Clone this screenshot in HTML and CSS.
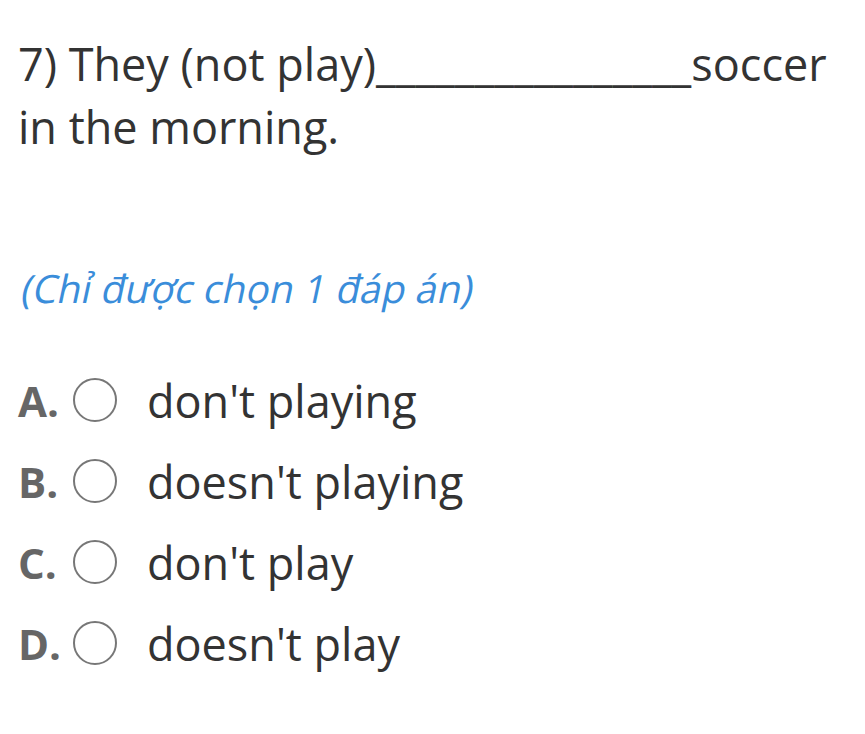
FILE: index.html
```html
<!DOCTYPE html>
<html lang="vi">
<head>
<meta charset="utf-8">
<link rel="stylesheet" href="styles.css">
</head>
<body>
<div class="quiz">
  <p class="question">7) They (not play)________________soccer in the morning.</p>
  <p class="hint"><span class="hint-text">(Chỉ được chọn 1 đáp án)</span></p>
  <ul class="options">
    <li class="option"><span class="label">A.</span><span class="radio"></span><span class="text">don't playing</span></li>
    <li class="option"><span class="label">B.</span><span class="radio"></span><span class="text">doesn't playing</span></li>
    <li class="option"><span class="label">C.</span><span class="radio"></span><span class="text">don't play</span></li>
    <li class="option"><span class="label">D.</span><span class="radio"></span><span class="text">doesn't play</span></li>
  </ul>
</div>
</body>
</html>
```
FILE: styles.css
```css
html, body {
  margin: 0;
  padding: 0;
  background: #ffffff;
}
.quiz {
  font-family: "Open Sans", "Noto Sans", sans-serif;
  padding: 32px 18px 0 18px;
  color: #333333;
}
.question {
  margin: 0;
  font-size: 45px;
  line-height: 63px;
  color: #333333;
}
.hint {
  margin: 108px 0 0 0;
  font-size: 39px;
  line-height: 44px;
  color: #3a8dda;
}
.hint-text {
  display: inline-block;
  transform: skewX(-12deg);
  transform-origin: left bottom;
}
.options {
  list-style: none;
  margin: 58px 0 0 0;
  padding: 0;
  display: flex;
  flex-direction: column;
  gap: 17px;
}
.option {
  display: flex;
  align-items: center;
  height: 64px;
}
.label {
  font-weight: 700;
  font-size: 42px;
  color: #666666;
  width: 55px;
}
.radio {
  box-sizing: border-box;
  width: 44px;
  height: 44px;
  border: 2.5px solid #777777;
  border-radius: 50%;
  margin-right: 30px;
}
.text {
  font-size: 45px;
  color: #333333;
}
```
